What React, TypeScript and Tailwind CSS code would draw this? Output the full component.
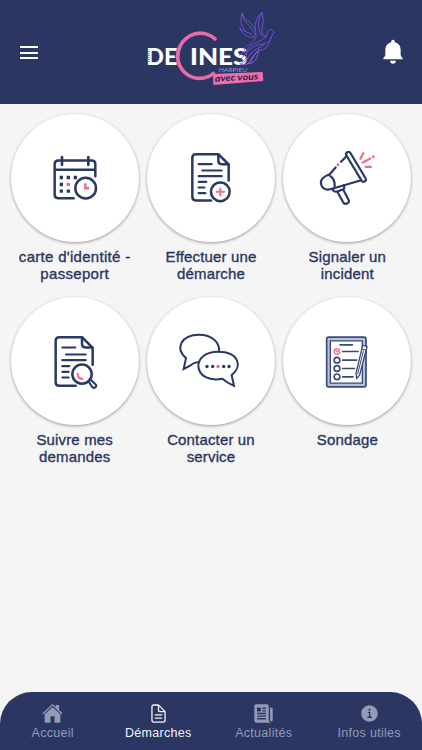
import React from "react";
import { IoDocumentTextOutline, IoHome, IoInformationCircle, IoNewspaper } from "react-icons/io5";

const NAVY = "#2a3864";
const PINK = "#f06a8c";

const Logo = () => (
  <svg className="mt-[5px] h-[90px] w-[140px]" viewBox="0 0 420 270" fill="none">
    <g fill="#ffffff" fontFamily="Lato, 'Open Sans', sans-serif" fontWeight="900" fontSize="68">
      <text x="19" y="179" textLength="93" lengthAdjust="spacingAndGlyphs">DE</text>
      <text x="150" y="179" textLength="172" lengthAdjust="spacingAndGlyphs">INES</text>
    </g>
    <path d="M27 138v34" stroke={NAVY} strokeWidth="3" strokeDasharray="3 3" />
    <path d="M228 105C208 83 176 79 151 92C125 106 112 132 113 157C115 192 144 220 178 220C196 220 211 214 224 203" stroke="#e76ba9" strokeWidth="11" />
    <text x="236" y="202" fill="#8c9bc9" fontFamily="Lato, sans-serif" fontSize="18" textLength="86" lengthAdjust="spacingAndGlyphs">HARPIEU</text>
    <path d="M219 207L368 201L370 228L220 240Z" fill="#ef6cae" />
    <text
      x="225"
      y="230"
      fill="#202547"
      fontFamily="Lato, sans-serif"
      fontStyle="italic"
      fontWeight="700"
      fontSize="27"
      textLength="130"
      lengthAdjust="spacingAndGlyphs"
      transform="rotate(-3 225 230)"
    >
      avec vous
    </text>
    <g stroke="url(#bird)" strokeWidth="2.8" strokeLinejoin="round" strokeLinecap="round">
      <path d="M348 92C335 62 309 55 306 24C298 53 307 72 320 81C311 79 304 74 299 69C305 88 321 96 341 99" />
      <path d="M306 24C314 47 334 48 346 75M320 81C330 84 337 91 344 96" />
      <path d="M348 91C342 66 345 40 366 22C371 45 370 54 366 68C364 79 367 90 379 94C382 83 383 76 391 74C397 74 399 79 404 82C398 84 397 88 395 95C389 112 377 117 360 119C341 121 330 130 317 149" />
      <path d="M366 22C352 48 354 69 361 84C365 94 371 98 379 94M348 91C349 106 336 114 320 123C309 131 319 143 298 150" />
      <path d="M379 95C365 109 344 113 330 124C318 134 323 147 306 158M393 98C389 117 381 128 369 133C351 139 337 151 331 169C323 180 309 181 299 177C318 174 322 159 334 144C345 131 361 130 373 117" />
      <path d="M318 147C322 160 313 170 302 170M356 131C353 143 355 154 347 164C341 173 332 175 323 177C335 169 342 151 350 139" />
    </g>
    <defs>
      <linearGradient id="bird" x1="300" y1="30" x2="370" y2="180" gradientUnits="userSpaceOnUse">
        <stop stopColor="#7b4de0" />
        <stop offset=".6" stopColor="#6b4bd8" />
        <stop offset="1" stopColor="#a36ae0" />
      </linearGradient>
    </defs>
  </svg>
);

interface IconProps {
  viewBox: string;
  width?: number;
  children: React.ReactNode;
}

const LineIcon: React.FC<IconProps> = ({ viewBox, width = 7.5, children }) => (
  <svg className="size-32" viewBox={viewBox} fill="none" stroke={NAVY} strokeWidth={width} strokeLinecap="round" strokeLinejoin="round">
    {children}
  </svg>
);

const CalendarIcon = () => (
  <LineIcon viewBox="17 19.5 384 384">
    <path d="M205 272H158Q148 272 148 262V170Q148 159 159 159H259Q270 159 270 170V206" />
    <path d="M149 187H269" strokeLinecap="butt" />
    <path d="M170 149V172M249 149V172" strokeWidth="8" />
    <g fill={NAVY} stroke="none">
      <path d="M163 205h10v10h-10zM184 205h10v10h-10zM205 205h10v10h-10zM163 226h10v10h-10zM163 246h10v10h-10zM184 246h10v10h-10z" />
      <path d="M184 226h10v10h-10z" fill={PINK} />
    </g>
    <circle cx="241" cy="242" r="31" />
    <path d="M240 227V242H251" stroke={PINK} strokeLinecap="butt" strokeLinejoin="miter" />
  </LineIcon>
);

const RequestIcon = () => (
  <LineIcon viewBox="15 19.5 384 384">
    <path d="M207 279H162Q151 279 151 268V151Q151 140 162 140H229L260 171V219" />
    <path d="M229 141V160Q229 170 239 170H259" />
    <path d="M170 170H209M181 189H239M170 206H239M170 223H193M170 240H187M170 257H190" strokeWidth="6.5" />
    <circle cx="235" cy="253" r="28" />
    <path d="M224 253H246M235 242V264" stroke={PINK} strokeWidth="6" />
  </LineIcon>
);

const MegaphoneIcon = () => (
  <LineIcon viewBox="16 19.5 384 384" width={6.5}>
    <rect x="-7" y="-51" width="14" height="102" rx="7" transform="translate(235 178) rotate(-31)" />
    <path d="M206 147L190 163M174 180L156 200C136 206 126 219 131 233C136 245 149 249 166 243L248 219" />
    <path d="M154 203C166 210 173 222 171 239" />
    <path d="M166 244C164 251 172 254 181 251L195 246C202 243 201 238 197 234" />
    <path d="M180 254L197 285C200 293 214 288 214 280L197 247" />
    <path d="M248 154L257 137M255 165L278 153M264 178H280" stroke={PINK} />
    <g fill={PINK} stroke="none">
      <circle cx="181" cy="172" r="4.5" />
      <circle cx="287" cy="148" r="4.5" />
    </g>
  </LineIcon>
);

const FollowIcon = () => (
  <LineIcon viewBox="17 21.6 384 384">
    <path d="M211 288H162Q151 288 151 277V153Q151 142 162 142H230L262 174V225" />
    <path d="M230 143V162Q230 173 240 173H261" />
    <path d="M171 173H210M182 194H241M171 211H241M171 229H192M171 246H190M171 263H190" strokeWidth="6.5" />
    <circle cx="230" cy="253" r="29" fill="#fff" />
    <path d="M217 252C217 262 223 267 231 267" stroke={PINK} strokeWidth="6" />
    <path d="M250 275L261 292C268 298 276 290 271 284L256 270" strokeWidth="6" />
  </LineIcon>
);

const ChatIcon = () => (
  <LineIcon viewBox="15 21.6 384 384" width={6}>
    <path d="M170 218Q160 216 148 225L125 238L132 205C98 176 118 135 171 135C211 135 233 158 231 184" strokeLinejoin="miter" />
    <path d="M269 256C303 229 290 186 229 186C188 186 169 207 169 229C171 260 202 274 241 267C250 275 262 282 276 288Z" strokeLinejoin="miter" />
    <g fill={NAVY} stroke="none">
      <circle cx="195" cy="230" r="5" />
      <circle cx="212" cy="230" r="5" />
      <circle cx="228" cy="230" r="5" fill={PINK} />
      <circle cx="245" cy="230" r="5" />
      <circle cx="261" cy="230" r="5" />
    </g>
  </LineIcon>
);

const SurveyIcon = () => (
  <LineIcon viewBox="16 21.6 384 384" width={5}>
    <g stroke="#3a4979">
      <rect x="147" y="142" width="118" height="149" rx="6" fill="#b6c1d9" />
      <rect x="158" y="153" width="96" height="127" fill="#fff" strokeWidth="4" />
      <path d="M187 165H224M195 185H241M195 211H237M195 236H230M195 261H226" />
      <circle cx="178" cy="211" r="8.5" />
      <circle cx="178" cy="236" r="8.5" />
      <circle cx="178" cy="261" r="8.5" />
      <path d="M255 167L268 170L246 255L237 266L235 251Z" fill="#fff" strokeWidth="4" />
      <path d="M253 178L266 181M257 184L240 252" strokeWidth="3" />
    </g>
    <path d="M182 178C171 174 168 182 171 190C176 196 187 193 186 186M175 183L179 187L187 178" stroke={PINK} strokeWidth="4" />
  </LineIcon>
);

const services = [
  { label: ["carte d'identité -", "passeport"], icon: <CalendarIcon />, spacing: "tracking-[0.3px]" },
  { label: ["Effectuer une", "démarche"], icon: <RequestIcon /> },
  { label: ["Signaler un", "incident"], icon: <MegaphoneIcon /> },
  { label: ["Suivre mes", "demandes"], icon: <FollowIcon /> },
  { label: ["Contacter un", "service"], icon: <ChatIcon /> },
  { label: ["Sondage"], icon: <SurveyIcon /> },
];

const tabs = [
  { label: "Accueil", Icon: IoHome },
  { label: "Démarches", Icon: IoDocumentTextOutline, active: true },
  { label: "Actualités", Icon: IoNewspaper },
  { label: "Infos utiles", Icon: IoInformationCircle },
];

const App: React.FC = () => {
  return (
    <div className="flex h-[750px] w-[422px] flex-col bg-[#f5f5f5] font-['Liberation_Sans',Arial,sans-serif]">
      <header className="grid h-[104px] shrink-0 grid-cols-[140px_140px_142px] bg-[#2b3762]">
        <button aria-label="Menu" className="mt-[46px] ml-[19.5px] flex h-[13px] w-[18.5px] flex-col justify-between">
          <span className="h-[2px] w-full bg-white" />
          <span className="h-[2px] w-full bg-white" />
          <span className="h-[2px] w-full bg-white" />
        </button>
        <Logo />
        <button aria-label="Notifications" className="mt-[30px] h-10 w-[52px] justify-self-end">
          <svg className="h-10 w-[52px]" viewBox="0 0 156 120" fill="#fff">
            <path d="M69 29C73 29 75 32 74 37C87 40 92 50 92 61V76C93 80 98 82 98 86V88H40V86C40 82 45 80 46 76V61C46 50 51 40 64 37C63 32 65 29 69 29ZM60 92H78C77 98 74 101 69 101C64 101 61 98 60 92Z" />
          </svg>
        </button>
      </header>

      <main className="grid flex-1 grid-cols-3 content-start gap-y-[13px] px-[6.5px] pt-[10px]">
        {services.map((s) => (
          <div key={s.label[0]} className="flex h-[170px] flex-col items-center">
            <div className="size-32 shrink-0 rounded-full bg-white shadow-[0_1px_3px_rgba(0,0,0,0.38)]">{s.icon}</div>
            <p
              className={`mt-[5.5px] text-center text-[15px] leading-[17.5px] text-[#2b3762] [-webkit-text-stroke:0.35px_#2b3762] ${s.spacing ?? "tracking-[0.15px]"}`}
            >
              {s.label.map((line) => (
                <span key={line} className="block whitespace-nowrap">
                  {line}
                </span>
              ))}
            </p>
          </div>
        ))}
      </main>

      <nav className="flex h-[58.5px] shrink-0 rounded-t-[32px] bg-[#2b3762]">
        {tabs.map(({ label, Icon, active }) => (
          <div key={label} className={`flex flex-1 flex-col items-center pt-[11px] ${active ? "text-[#f1f2f8]" : "text-[#949bb6]"}`}>
            <Icon className="size-[21px]" />
            <span className="mt-[1.5px] text-[12.5px] leading-[16px] tracking-[0.3px] whitespace-nowrap">{label}</span>
          </div>
        ))}
      </nav>
    </div>
  );
};

export default App;
